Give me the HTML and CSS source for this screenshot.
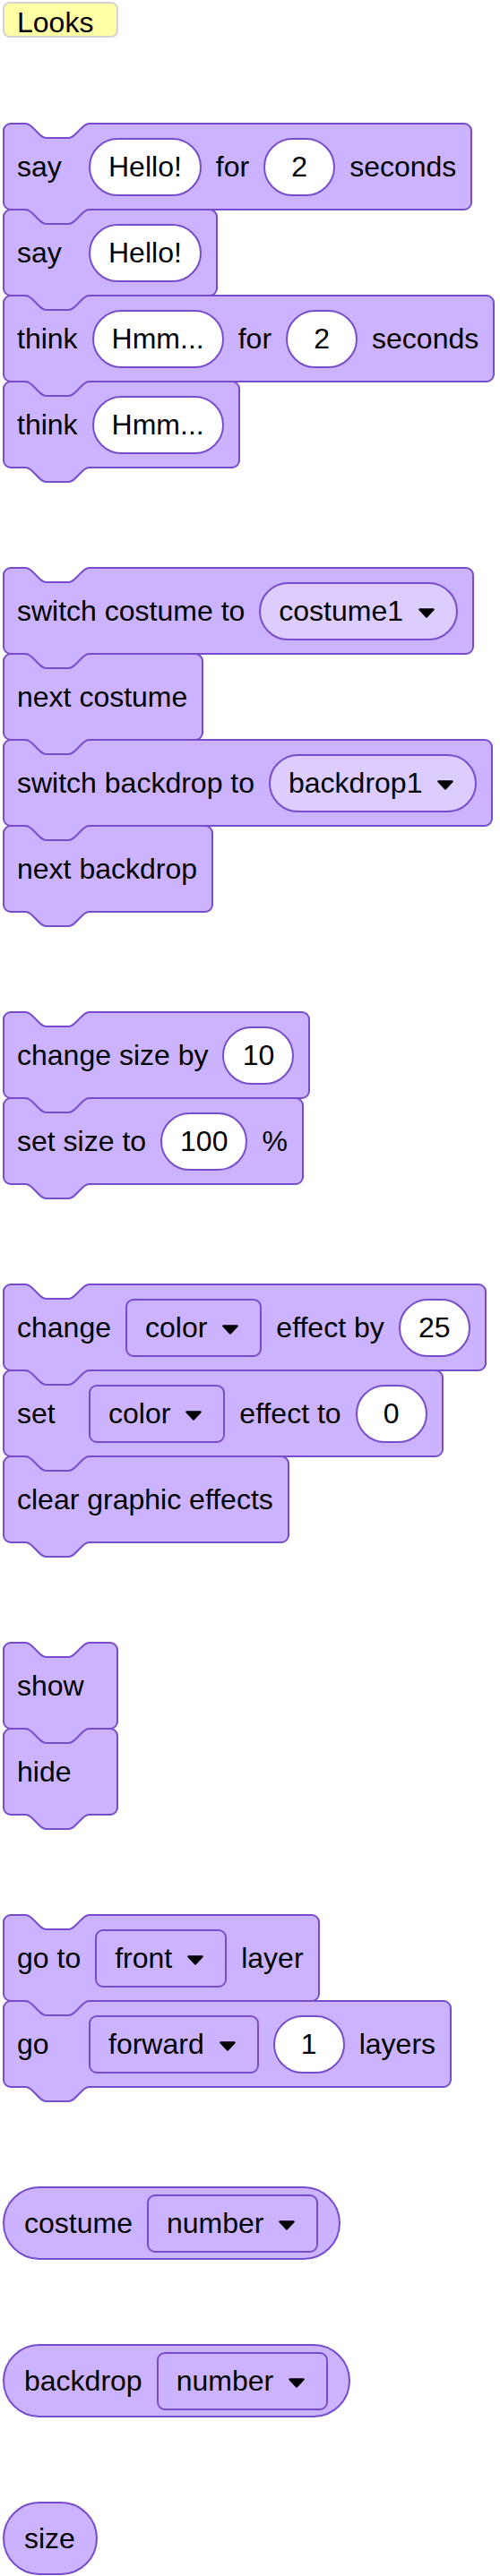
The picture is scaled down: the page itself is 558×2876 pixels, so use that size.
FILE: index.html
```html
<!DOCTYPE html>
<html lang="en">
<head>
    <meta charset="UTF-8">
    <meta name="viewport" content="width=device-width, initial-scale=1.0">
    <title> Looks blocks </title>
    <link rel="stylesheet" href="styles.css">
</head>
<body>

    <!-- shared shape for the notch on top and the tab below a stack block -->
    <svg class="defs" width="0" height="0" aria-hidden="true">
        <defs>
            <path id="bump-fill" d="M25 0V1c4 0 6 2 8 4l8 8c2 2 4 4 8 4h24c4 0 6-2 8-4l8-8c2-2 4-4 8-4V0z"/>
            <path id="bump-line" d="M25 1c4 0 6 2 8 4l8 8c2 2 4 4 8 4h24c4 0 6-2 8-4l8-8c2-2 4-4 8-4"/>
            <polygon id="arrow" points="2.5,2.5 17.5,2.5 10,10.5"/>
        </defs>
    </svg>

    <main class="page">
        <div class="category">Looks</div>

        <div class="script">
            <div class="block">
                <svg class="notch"><use href="#bump-fill"/><use class="edge" href="#bump-line"/></svg>
                <span>say</span>
                <span class="field">Hello!</span>
                <span>for</span>
                <span class="field">2</span>
                <span>seconds</span>
                <svg class="tab"><use href="#bump-fill"/><use class="edge" href="#bump-line"/></svg>
            </div>
            <div class="block">
                <span>say</span>
                <span class="field">Hello!</span>
                <svg class="tab"><use href="#bump-fill"/><use class="edge" href="#bump-line"/></svg>
            </div>
            <div class="block">
                <span>think</span>
                <span class="field">Hmm...</span>
                <span>for</span>
                <span class="field">2</span>
                <span>seconds</span>
                <svg class="tab"><use href="#bump-fill"/><use class="edge" href="#bump-line"/></svg>
            </div>
            <div class="block">
                <span>think</span>
                <span class="field">Hmm...</span>
                <svg class="tab"><use href="#bump-fill"/><use class="edge" href="#bump-line"/></svg>
            </div>
        </div>

        <div class="script">
            <div class="block">
                <svg class="notch"><use href="#bump-fill"/><use class="edge" href="#bump-line"/></svg>
                <span>switch costume to</span>
                <span class="menu round">costume1 <svg class="arrow"><use href="#arrow"/></svg></span>
                <svg class="tab"><use href="#bump-fill"/><use class="edge" href="#bump-line"/></svg>
            </div>
            <div class="block">
                <span>next costume</span>
                <svg class="tab"><use href="#bump-fill"/><use class="edge" href="#bump-line"/></svg>
            </div>
            <div class="block">
                <span>switch backdrop to</span>
                <span class="menu round">backdrop1 <svg class="arrow"><use href="#arrow"/></svg></span>
                <svg class="tab"><use href="#bump-fill"/><use class="edge" href="#bump-line"/></svg>
            </div>
            <div class="block">
                <span>next backdrop</span>
                <svg class="tab"><use href="#bump-fill"/><use class="edge" href="#bump-line"/></svg>
            </div>
        </div>

        <div class="script">
            <div class="block">
                <svg class="notch"><use href="#bump-fill"/><use class="edge" href="#bump-line"/></svg>
                <span>change size by</span>
                <span class="field">10</span>
                <svg class="tab"><use href="#bump-fill"/><use class="edge" href="#bump-line"/></svg>
            </div>
            <div class="block">
                <span>set size to</span>
                <span class="field">100</span>
                <span>%</span>
                <svg class="tab"><use href="#bump-fill"/><use class="edge" href="#bump-line"/></svg>
            </div>
        </div>

        <div class="script">
            <div class="block">
                <svg class="notch"><use href="#bump-fill"/><use class="edge" href="#bump-line"/></svg>
                <span>change</span>
                <span class="menu">color <svg class="arrow"><use href="#arrow"/></svg></span>
                <span>effect by</span>
                <span class="field">25</span>
                <svg class="tab"><use href="#bump-fill"/><use class="edge" href="#bump-line"/></svg>
            </div>
            <div class="block">
                <span>set</span>
                <span class="menu">color <svg class="arrow"><use href="#arrow"/></svg></span>
                <span>effect to</span>
                <span class="field">0</span>
                <svg class="tab"><use href="#bump-fill"/><use class="edge" href="#bump-line"/></svg>
            </div>
            <div class="block">
                <span>clear graphic effects</span>
                <svg class="tab"><use href="#bump-fill"/><use class="edge" href="#bump-line"/></svg>
            </div>
        </div>

        <div class="script">
            <div class="block">
                <svg class="notch"><use href="#bump-fill"/><use class="edge" href="#bump-line"/></svg>
                <span>show</span>
                <svg class="tab"><use href="#bump-fill"/><use class="edge" href="#bump-line"/></svg>
            </div>
            <div class="block">
                <span>hide</span>
                <svg class="tab"><use href="#bump-fill"/><use class="edge" href="#bump-line"/></svg>
            </div>
        </div>

        <div class="script">
            <div class="block">
                <svg class="notch"><use href="#bump-fill"/><use class="edge" href="#bump-line"/></svg>
                <span>go to</span>
                <span class="menu">front <svg class="arrow"><use href="#arrow"/></svg></span>
                <span>layer</span>
                <svg class="tab"><use href="#bump-fill"/><use class="edge" href="#bump-line"/></svg>
            </div>
            <div class="block">
                <span>go</span>
                <span class="menu">forward <svg class="arrow"><use href="#arrow"/></svg></span>
                <span class="field">1</span>
                <span>layers</span>
                <svg class="tab"><use href="#bump-fill"/><use class="edge" href="#bump-line"/></svg>
            </div>
        </div>

        <div class="reporter">
            <span>costume</span>
            <span class="menu">number <svg class="arrow"><use href="#arrow"/></svg></span>
        </div>

        <div class="reporter">
            <span>backdrop</span>
            <span class="menu">number <svg class="arrow"><use href="#arrow"/></svg></span>
        </div>

        <div class="reporter">
            <span>size</span>
        </div>
    </main>

</body>
</html>
```

FILE: styles.css
```css
body {
    margin: 0;
    padding: 2px 0 0 3px;
    font-family: "Liberation Sans", Arial, sans-serif;
    font-size: 32px;
    color: #000;
    background: #fff;
}

.defs { position: absolute; }

.page {
    display: flex;
    flex-direction: column;
    align-items: flex-start;
    gap: 94px;
}

.category {
    box-sizing: border-box;
    height: 40px;
    margin-bottom: 1px;
    padding: 6px 26px 0 14px;
    line-height: 30px;
    background: #ffffa5;
    border: 2px solid #d3d3d3;
    border-radius: 8px;
}

.script {
    display: flex;
    flex-direction: column;
    align-items: flex-start;
    padding-bottom: 16px;
}

.block {
    position: relative;
    display: flex;
    align-items: center;
    gap: 16px;
    box-sizing: border-box;
    height: 98px;
    min-width: 129px;
    padding: 0 16px 0 14px;
    white-space: nowrap;
    background: #ccb3ff;
    border: 2px solid #774dcb;
    border-radius: 9px;
}
.block + .block { margin-top: -2px; }

/* the first input never starts before 96px, so "say", "set", "go" get a wide slot */
.block > span:first-of-type { min-width: 64px; }

.notch, .tab {
    position: absolute;
    left: -2px;
    width: 100px;
    height: 20px;
    overflow: visible;
}
.notch { top: -2px; fill: #fff; }
.tab { top: 100%; fill: #ccb3ff; z-index: 1; }
.edge {
    fill: none;
    stroke: #774dcb;
    stroke-width: 2;
}

.field {
    display: flex;
    align-items: center;
    justify-content: center;
    box-sizing: border-box;
    height: 65px;
    min-width: 80px;
    padding: 0 20px;
    background: #fff;
    border: 2px solid #774dcb;
    border-radius: 33px;
}

.menu {
    display: flex;
    align-items: center;
    gap: 16px;
    box-sizing: border-box;
    height: 65px;
    padding: 0 23px 0 20px;
    background: #ccb3ff;
    border: 2px solid #774dcb;
    border-radius: 9px;
}
.menu.round {
    background: #ddccff;
    border-radius: 33px;
}

.arrow {
    width: 20px;
    height: 13px;
    margin-top: 4px;
    fill: #000;
    stroke: #000;
    stroke-width: 2.5;
    stroke-linejoin: round;
}

.reporter {
    display: flex;
    align-items: center;
    gap: 16px;
    box-sizing: border-box;
    height: 82px;
    padding: 0 23px 0 22px;
    white-space: nowrap;
    background: #ccb3ff;
    border: 2px solid #774dcb;
    border-radius: 41px;
}
```
